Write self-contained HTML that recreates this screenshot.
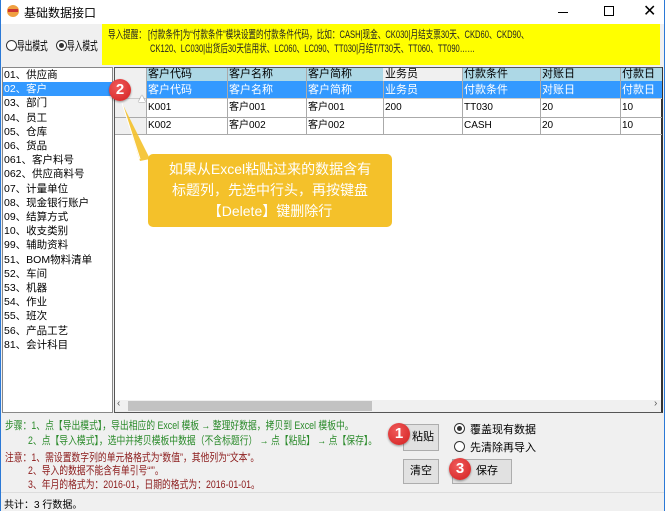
<!DOCTYPE html>
<html><head><meta charset="utf-8"><style>
*{margin:0;padding:0;box-sizing:border-box}
body{width:665px;height:511px;background:#f0f0f0;font-family:"Liberation Sans","Noto Sans CJK SC",sans-serif;font-size:11px;color:#000;position:relative;overflow:hidden}
.a{position:absolute;white-space:nowrap}
.sx{transform-origin:0 0}
.r span{position:absolute;top:0;line-height:14px;height:14px;white-space:nowrap}
.circ{position:absolute;width:22px;height:22px;border-radius:50%;background:radial-gradient(circle at 40% 35%,#f05a5a,#d21f1f);color:#fff;font-weight:bold;font-size:15px;text-align:center;line-height:22px;box-shadow:0 1px 2px rgba(0,0,0,.4)}
.btn{position:absolute;background:#e1e1e1;border:1px solid #adadad;text-align:center;font-size:11px}
.rad{position:absolute;width:11px;height:11px;border:1px solid #333;border-radius:50%;background:#fff}
.rad.on::after{content:"";position:absolute;left:2px;top:2px;width:5px;height:5px;border-radius:50%;background:#333}
</style></head><body>
<div class="a" style="left:0;top:0;width:665px;height:24px;background:#fff"></div>
<div class="a" style="left:0;top:0;width:1px;height:511px;background:#2b79d6"></div>
<div class="a" style="left:664px;top:0;width:1px;height:511px;background:#2b79d6"></div>
<div class="a" style="left:7px;top:5px;width:12px;height:12px;border-radius:50%;background:#f0a040"></div>
<div class="a" style="left:8px;top:9px;width:10px;height:3px;background:#c33"></div>
<div class="a" style="left:24px;top:4px;font-size:12px">基础数据接口</div>
<div class="a" style="left:558px;top:12px;width:10px;height:1px;background:#000"></div>
<div class="a" style="left:604px;top:6px;width:10px;height:10px;border:1px solid #000"></div>
<div class="a" style="left:643px;top:1px;font-size:16px">✕</div>

<div class="rad" style="left:6px;top:40px"></div><div class="a sx" style="left:17px;top:37px;font-size:12px;transform:scaleX(.64)">导出模式</div>
<div class="rad on" style="left:56px;top:40px"></div><div class="a sx" style="left:67px;top:37px;font-size:12px;transform:scaleX(.64)">导入模式</div>
<div class="a" style="left:102px;top:24px;width:558px;height:41px;background:#ffff00"></div>
<div class="a sx" style="left:108px;top:26px;font-size:11px;color:#222;transform:scaleX(.69)">导入提醒：&nbsp;[付款条件]为“付款条件”模块设置的付款条件代码，比如：CASH|现金、CK030|月结支票30天、CKD60、CKD90、</div>
<div class="a sx" style="left:150px;top:40px;font-size:11px;color:#222;transform:scaleX(.69)">CK120、LC030|出货后30天信用状、LC060、LC090、TT030|月结T/T30天、TT060、TT090……</div>

<div class="a" style="left:2px;top:67px;width:111px;height:346px;background:#fff;border:1px solid #888"></div>
<div class="a" style="left:3px;top:82px;width:109px;height:14px;background:#3399ff"></div>
<div class="a" style="left:4px;top:68px;line-height:14.2px;font-size:10.5px">01、供应商<br><span style="color:#fff">02、客户</span><br>03、部门<br>04、员工<br>05、仓库<br>06、货品<br>061、客户料号<br>062、供应商料号<br>07、计量单位<br>08、现金银行账户<br>09、结算方式<br>10、收支类别<br>99、辅助资料<br>51、BOM物料清单<br>52、车间<br>53、机器<br>54、作业<br>55、班次<br>56、产品工艺<br>81、会计科目</div>

<div class="a" style="left:114px;top:67px;width:549px;height:346px;background:#fff;border:1px solid #555;border-right:2px solid #333"></div>
<div class="a" style="left:115px;top:68px;width:31px;height:67px;background:#f0f0f0"></div>
<div class="a" style="left:146px;top:68px;width:516px;height:13px;background:#add8e6"></div>
<div class="a" style="left:146px;top:81px;width:516px;height:17px;background:#3399ff"></div>
<div class="a" style="left:115px;top:98px;width:547px;height:1px;background:#ccc"></div>
<div class="a" style="left:115px;top:117px;width:547px;height:1px;background:#aaa"></div>
<div class="a" style="left:115px;top:134px;width:547px;height:1px;background:#aaa"></div>
<div class="a" style="left:146px;top:68px;width:1px;height:67px;background:#aaa"></div>
<div class="a" style="left:227px;top:68px;width:1px;height:67px;background:#aaa"></div>
<div class="a" style="left:306px;top:68px;width:1px;height:67px;background:#aaa"></div>
<div class="a" style="left:383px;top:68px;width:1px;height:67px;background:#aaa"></div>
<div class="a" style="left:462px;top:68px;width:1px;height:67px;background:#aaa"></div>
<div class="a" style="left:540px;top:68px;width:1px;height:67px;background:#aaa"></div>
<div class="a" style="left:620px;top:68px;width:1px;height:67px;background:#aaa"></div>
<div class="a" style="left:383px;top:68px;width:79px;height:13px;background:#f0f0f0"></div>
<div class="a r" style="left:148px;top:67px;font-size:11px">
<span style="left:0">客户代码</span><span style="left:81px">客户名称</span><span style="left:160px">客户简称</span><span style="left:237px">业务员</span><span style="left:316px">付款条件</span><span style="left:394px">对账日</span><span style="left:474px">付款日</span></div>
<div class="a r" style="left:148px;top:83px;color:#fff;font-size:11px">
<span style="left:0">客户代码</span><span style="left:81px">客户名称</span><span style="left:160px">客户简称</span><span style="left:237px">业务员</span><span style="left:316px">付款条件</span><span style="left:394px">对账日</span><span style="left:474px">付款日</span></div>
<div class="a r" style="left:148px;top:101px;font-size:10px">
<span style="left:0">K001</span><span style="left:81px">客户001</span><span style="left:160px">客户001</span><span style="left:237px">200</span><span style="left:316px">TT030</span><span style="left:394px">20</span><span style="left:474px">10</span></div>
<div class="a r" style="left:148px;top:119px;font-size:10px">
<span style="left:0">K002</span><span style="left:81px">客户002</span><span style="left:160px">客户002</span><span style="left:316px">CASH</span><span style="left:394px">20</span><span style="left:474px">10</span></div>
<div class="a" style="left:115px;top:400px;width:546px;height:12px;background:#f0f0f0"></div>
<div class="a" style="left:128px;top:401px;width:244px;height:10px;background:#c2c2c2"></div>
<div class="a" style="left:117px;top:398px;font-size:10px;color:#555">‹</div>
<div class="a" style="left:654px;top:398px;font-size:10px;color:#555">›</div>

<div class="a" style="left:136px;top:91px;font-size:12px;color:#fff;text-shadow:0 0 1px #000">▲</div>
<svg class="a" style="left:110px;top:95px" width="60" height="70"><path d="M12 8 L30 66 L40 64 Z" fill="#f4c12a" opacity=".9"/><path d="M12 8 L30 64" stroke="#fff" stroke-width="1"/></svg>
<div class="a" style="left:148px;top:154px;width:244px;height:73px;background:#f4c12a;border-radius:5px;color:#fff;font-size:14px;text-align:center;line-height:21px;padding-top:5px;white-space:normal">如果从Excel粘贴过来的数据含有<br>标题列，先选中行头，再按键盘<br>【Delete】键删除行</div>
<div class="circ" style="left:109px;top:79px">2</div>

<div class="a sx" style="left:5px;top:417px;color:#2a8a2a;font-size:11px;transform:scaleX(.8)">步骤：1、点【导出模式】，导出相应的 Excel 模板 → 整理好数据，拷贝到 Excel 模板中。</div>
<div class="a sx" style="left:28px;top:432px;color:#2a8a2a;font-size:11px;transform:scaleX(.8)">2、点【导入模式】，选中并拷贝模板中数据（不含标题行） → 点【粘贴】 → 点【保存】。</div>
<div class="a sx" style="left:5px;top:449px;color:#8b1a1a;font-size:11px;transform:scaleX(.8)">注意：1、需设置数字列的单元格格式为“数值”，其他列为“文本”。</div>
<div class="a sx" style="left:28px;top:462px;color:#8b1a1a;font-size:11px;transform:scaleX(.8)">2、导入的数据不能含有单引号“'”。</div>
<div class="a sx" style="left:28px;top:476px;color:#8b1a1a;font-size:11px;transform:scaleX(.8)">3、年月的格式为：2016-01，日期的格式为：2016-01-01。</div>

<div class="btn" style="left:403px;top:424px;width:36px;height:27px;line-height:25px;padding-left:4px">粘贴</div>
<div class="btn" style="left:403px;top:459px;width:36px;height:25px;line-height:23px">清空</div>
<div class="btn" style="left:452px;top:459px;width:60px;height:25px;line-height:23px;padding-left:10px">保存</div>
<div class="circ" style="left:388px;top:423px">1</div>
<div class="circ" style="left:449px;top:458px">3</div>
<div class="rad on" style="left:454px;top:423px"></div><div class="a" style="left:470px;top:421px">覆盖现有数据</div>
<div class="rad" style="left:454px;top:441px"></div><div class="a" style="left:470px;top:439px">先清除再导入</div>

<div class="a" style="left:1px;top:492px;width:663px;height:1px;background:#ddd"></div>
<div class="a" style="left:4px;top:496px;font-size:10px">共计：3 行数据。</div>
</body></html>
